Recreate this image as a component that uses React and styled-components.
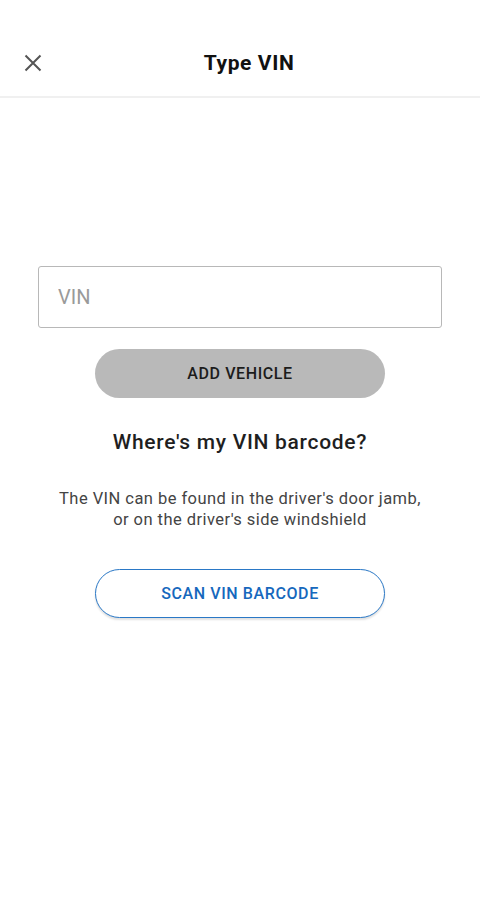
import React from "react";
import styled, { createGlobalStyle } from "styled-components";

const GlobalStyle = createGlobalStyle`
  html, body {
    margin: 0;
    padding: 0;
    background: #ffffff;
    font-family: Roboto, "Liberation Sans", sans-serif;
  }
`;

const Page = styled.div`
  width: 480px;
  min-height: 900px;
  background: #ffffff;
  display: flex;
  flex-direction: column;
`;

const Header = styled.header`
  height: 98px;
  display: grid;
  grid-template-columns: 66px 1fr 48px;
  align-items: center;
  border-bottom: 2px solid #f0f0f0;
  box-sizing: border-box;
  padding-top: 30px;
`;

const CloseButton = styled.button`
  border: none;
  background: none;
  padding: 0;
  margin-left: 24px;
  width: 18px;
  height: 18px;
  display: flex;
  align-items: center;
  justify-content: center;
  cursor: pointer;
`;

const Title = styled.h1`
  margin: 0;
  text-align: center;
  font-size: 21px;
  font-weight: 700;
  letter-spacing: 0.6px;
  color: #111111;
`;

const Content = styled.main`
  display: flex;
  flex-direction: column;
  align-items: center;
  padding-top: 168px;
`;

const VinInput = styled.input`
  box-sizing: border-box;
  width: 404px;
  height: 62px;
  border: 1px solid #b8b8b8;
  border-radius: 3px;
  padding: 0 19px;
  font-family: inherit;
  font-size: 20px;
  color: #222;
  outline: none;

  &::placeholder {
    color: #9a9a9a;
  }
`;

const PillButton = styled.button`
  box-sizing: border-box;
  width: 290px;
  height: 49px;
  border-radius: 25px;
  font-family: inherit;
  font-size: 16px;
  font-weight: 500;
  letter-spacing: 0.6px;
  cursor: pointer;
  border: ${(p) => (p.$outline ? "1.5px solid #2a78c6" : "none")};
  background: ${(p) => (p.$outline ? "#ffffff" : "#b9b9b9")};
  color: ${(p) => (p.$outline ? "#1668bd" : "#1c1c1c")};
  box-shadow: ${(p) => (p.$outline ? "0 2px 2px rgba(0,0,0,0.12)" : "none")};
  margin-top: ${(p) => p.$top}px;
`;

const Question = styled.h2`
  margin: 32px 0 0;
  font-size: 21px;
  font-weight: 500;
  letter-spacing: 0.7px;
  color: #1f1f1f;
`;

const Hint = styled.p`
  margin: 34px 0 0;
  text-align: center;
  font-size: 16.5px;
  line-height: 21px;
  letter-spacing: 0.45px;
  color: #444444;
`;

const CloseIcon = () => (
  <svg width="18" height="18" viewBox="0 0 18 18">
    <path d="M1.5 1.5 L16.5 16.5 M16.5 1.5 L1.5 16.5" stroke="#555" strokeWidth="2" fill="none" />
  </svg>
);

const App = () => (
  <Page>
    <GlobalStyle />
    <Header>
      <CloseButton aria-label="Close">
        <CloseIcon />
      </CloseButton>
      <Title>Type VIN</Title>
      <span />
    </Header>
    <Content>
      <VinInput placeholder="VIN" />
      <PillButton $top={21}>ADD VEHICLE</PillButton>
      <Question>Where's my VIN barcode?</Question>
      <Hint>
        The VIN can be found in the driver's door jamb,
        <br />
        or on the driver's side windshield
      </Hint>
      <PillButton $outline $top={39}>SCAN VIN BARCODE</PillButton>
    </Content>
  </Page>
);

export default App;
